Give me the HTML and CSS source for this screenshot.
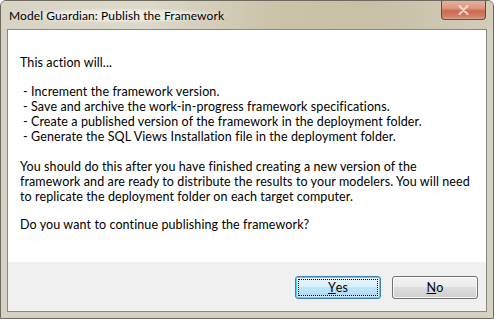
FILE: index.html
```html
<!DOCTYPE html>
<html>

<head>
    <title>Model Guardian: Publish the Framework</title>
    <link rel="stylesheet" href="styles.css">
</head>

<body>
    <div class="window">
        <!-- Title bar -->
        <div class="titlebar">
            <span class="title">Model Guardian: Publish the Framework</span>
            <div class="close-btn">
                <svg width="11" height="10" viewBox="0 0 11 10">
                    <path d="M1.5 1 L9.5 9 M9.5 1 L1.5 9" stroke="#f4d3c8" stroke-width="2.2" stroke-linecap="round"/>
                </svg>
            </div>
        </div>

        <!-- Client area -->
        <div class="client">
            <div class="message">
                <p class="intro">This action will...</p>
                <ul class="steps">
                    <li>- Increment the framework version.</li>
                    <li>- Save and archive the work-in-progress framework specifications.</li>
                    <li>- Create a published version of the framework in the deployment folder.</li>
                    <li>- Generate the SQL Views Installation file in the deployment folder.</li>
                </ul>
                <p class="note">You should do this after you have finished creating a new version of the<br>
                    framework and are ready to distribute the results to your modelers. You will need<br>
                    to replicate the deployment folder on each target computer.</p>
                <p class="question">Do you want to continue publishing the framework?</p>
            </div>
            <div class="buttons">
                <button class="btn default"><span class="focus"><u>Y</u>es</span></button>
                <button class="btn"><span class="focus"><u>N</u>o</span></button>
            </div>
        </div>
    </div>
</body>

</html>
```

FILE: styles.css
```css
body {
    margin: 0;
    padding: 0;
    overflow: hidden;
    font-family: Lato, "Noto Sans", sans-serif;
    font-size: 12.5px;
    color: #000;
}

.window {
    width: 494px;
    height: 319px;
    box-sizing: border-box;
    border: 1px solid #6e6a5e;
    border-radius: 6px 6px 0 0;
    background: #d6d2c3;
    padding: 0 6px 6px 6px;
    display: flex;
    flex-direction: column;
}

.titlebar {
    height: 28px;
    flex: none;
    display: flex;
    align-items: flex-start;
    justify-content: space-between;
    background: linear-gradient(to right, #d8d4c5 0%, #dcd8ca 30%, #cbc3aa 55%, #c7bfa6 75%, #d2ccb9 100%);
    margin: 0 -6px;
    padding: 0 7px 0 7px;
    border-radius: 5px 5px 0 0;
}

.title {
    margin-top: 7px;
    padding: 0 6px 0 1px;
    font-size: 12px;
    letter-spacing: 0.1px;
    line-height: 15px;
    background: radial-gradient(ellipse at center, rgba(240, 238, 230, 0.9) 40%, rgba(240, 238, 230, 0) 72%);
}

.close-btn {
    width: 43px;
    height: 18px;
    border: 1px solid #7c4636;
    border-top: none;
    border-radius: 0 0 4px 4px;
    background: linear-gradient(to bottom, #e6b0a0 0%, #dc9782 40%, #cc6a50 55%, #cf7e66 85%, #dba190 100%);
    display: flex;
    align-items: center;
    justify-content: center;
}

.client {
    flex: 1;
    border: 1px solid #8a877b;
    background: #f0f0f0;
    display: flex;
    flex-direction: column;
}

.message {
    height: 232px;
    box-sizing: border-box;
    background: #fff;
    padding: 25px 12px 0 12px;
    line-height: 15px;
    letter-spacing: 0.1px;
    white-space: nowrap;
}

.message p {
    margin: 0;
}

.intro {
    margin-bottom: 14px !important;
}

.steps {
    list-style: none;
    margin: 0 0 15px 0;
    padding: 0 0 0 3px;
}

.note {
    margin-bottom: 13px !important;
}

.buttons {
    display: flex;
    justify-content: flex-end;
    gap: 11px;
    padding: 14px 8px 0 0;
}

.btn {
    width: 86px;
    height: 23px;
    padding: 2px;
    border: 1px solid #707070;
    border-radius: 3px;
    background: linear-gradient(to bottom, #f2f2f2 0%, #ebebeb 49%, #dddddd 50%, #cfcfcf 100%);
    box-shadow: inset 0 0 0 1px rgba(255, 255, 255, 0.8);
    font-family: inherit;
    font-size: 12.5px;
    letter-spacing: 0.1px;
    color: #000;
    display: flex;
}

.btn .focus {
    flex: 1;
    display: flex;
    align-items: center;
    justify-content: center;
    border: 1px dotted transparent;
}

.btn.default {
    border-color: #3c7fb1;
    background: linear-gradient(to bottom, #eaf6fd 0%, #d9f0fc 49%, #bee6fd 50%, #a7d9f5 100%);
    box-shadow: inset 0 0 0 1px #48d6fb, inset 0 0 2px 2px rgba(255, 255, 255, 0.6);
}

.btn.default .focus {
    border-color: #000;
}
```
